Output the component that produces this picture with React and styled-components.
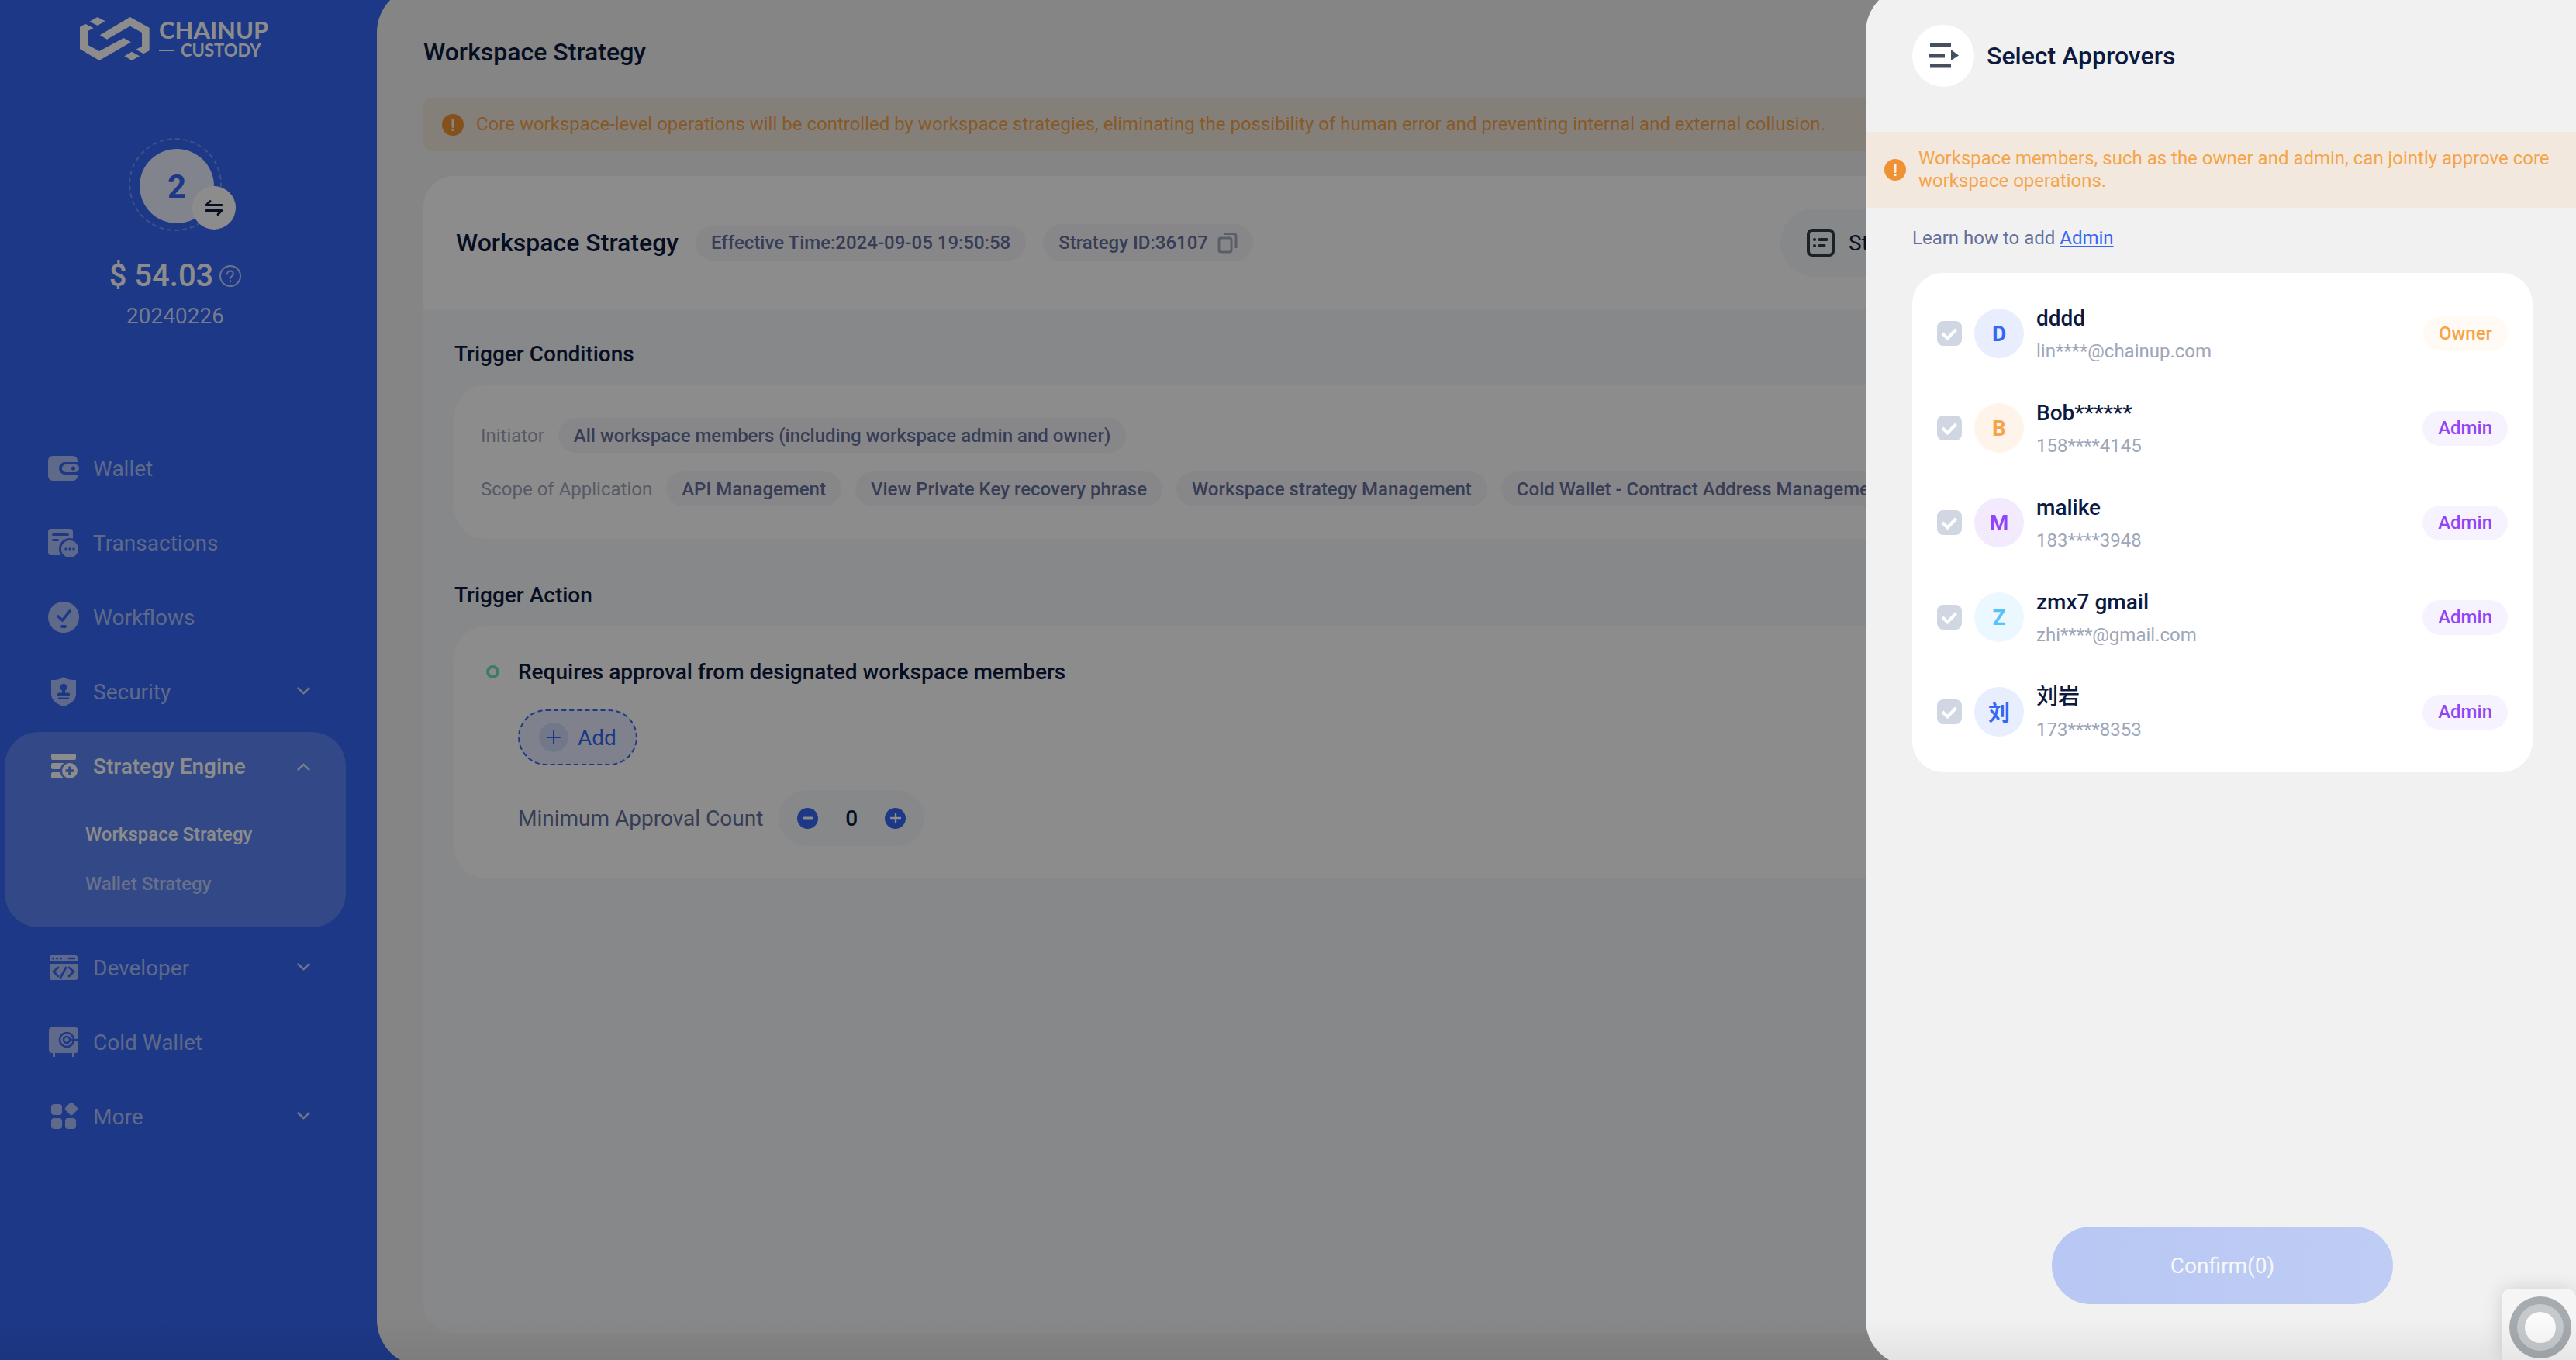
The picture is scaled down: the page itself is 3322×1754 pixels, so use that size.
import React from "react";
import styled, { createGlobalStyle } from "styled-components";

const c = {
  blue: "#3566f4",
  ink: "#0d1a3f",
  slate: "#646f9b",
  muted: "#9ea6b9",
  page: "#f2f2f2",
  tint: "#f6f8fb",
  chip: "#f6f6fb",
  orange: "#f5a44a",
  purple: "#9145f7",
};

const Global = createGlobalStyle`
  *, *::before, *::after { box-sizing: border-box; }
  body {
    margin: 0;
    background: ${c.blue};
    color: ${c.ink};
    font-family: Roboto, "Noto Sans CJK SC", sans-serif;
    font-size: 28px;
  }
  h1, h2, h3 { margin: 0; font-weight: 500; }
  p, ul { margin: 0; padding: 0; }
  ul { list-style: none; }
  button, input { font: inherit; color: inherit; border: 0; padding: 0; background: none; }
  a { color: inherit; text-decoration: none; }
  svg { display: block; flex: none; }
`;

const Shell = styled.div`
  position: relative;
  display: grid;
  grid-template-columns: 486px minmax(0, 1fr);
  min-height: 100vh;
  overflow: hidden;
`;

/* ---------- sidebar ---------- */

const Sidebar = styled.aside`
  display: flex;
  flex-direction: column;
  padding: 22px 34px 0 0;
  color: #fff;
`;

const Brand = styled.a`
  display: flex;
  align-items: center;
  gap: 12px;
  height: 56px;
  margin-left: 103px;
  font-family: Lato, sans-serif;
  font-weight: 700;
`;

const BrandName = styled.span`
  display: grid;
  gap: 4px;
`;

const BrandTop = styled.span`
  font-size: 31px;
  line-height: 26px;
`;

const BrandSub = styled.span`
  display: flex;
  align-items: center;
  gap: 8px;
  font-size: 22px;
  line-height: 20px;

  &::before {
    content: "";
    width: 20px;
    height: 2px;
    background: #fff;
  }
`;

const Account = styled.section`
  display: flex;
  flex-direction: column;
  align-items: center;
  margin: 100px 0 134px;
`;

const Ring = styled.div`
  position: relative;
  width: 120px;
  height: 120px;
  padding: 12px;
  border: 2px dashed rgba(255, 255, 255, 0.3);
  border-radius: 50%;
`;

const Initial = styled.div`
  display: grid;
  place-items: center;
  width: 96px;
  height: 96px;
  border-radius: 50%;
  background: #ebf0ff;
  color: ${c.blue};
  font-size: 42px;
  font-weight: 700;
`;

const SwapButton = styled.button`
  position: absolute;
  top: 60px;
  right: -20px;
  display: grid;
  place-items: center;
  width: 56px;
  height: 56px;
  border-radius: 50%;
  background: #fff;
  color: ${c.ink};
`;

const Balance = styled.div`
  display: flex;
  align-items: center;
  gap: 8px;
  margin-top: 34px;
  font-size: 40px;
  line-height: 48px;
  font-weight: 500;
`;

const AccountName = styled.div`
  margin-top: 10px;
  line-height: 36px;
  opacity: 0.8;
`;

const Nav = styled.nav`
  display: flex;
  flex-direction: column;
  gap: 8px;
  padding-left: 6px;
`;

const NavGroup = styled.div`
  width: 440px;
  border-radius: 44px;
  background: ${(p) => (p.$active ? "rgba(255,255,255,0.2)" : "transparent")};
  padding-bottom: ${(p) => (p.$active ? "24px" : "0")};
`;

const NavRow = styled.a`
  display: flex;
  align-items: center;
  gap: 18px;
  width: 100%;
  height: 88px;
  padding: 0 46px 0 56px;
  color: ${(p) => (p.$active ? "#fff" : "rgba(255,255,255,0.6)")};
  font-weight: ${(p) => (p.$active ? "500" : "400")};
  text-align: left;
`;

const NavLabel = styled.span`
  flex: 1;
`;

const Chevron = styled.svg`
  color: rgba(255, 255, 255, 0.75);
  transform: ${(p) => (p.$up ? "rotate(180deg)" : "none")};
`;

const SubList = styled.ul`
  padding: 12px 0 0 104px;
`;

const SubLink = styled.a`
  display: block;
  font-size: 24px;
  line-height: 64px;
  font-weight: 500;
  color: ${(p) => (p.$active ? "#fff" : "rgba(255,255,255,0.6)")};
`;

/* ---------- main ---------- */

const Main = styled.main`
  display: flex;
  flex-direction: column;
  margin: -18px 0 -8px;
  padding: 66px 60px 42px;
  border-radius: 60px 0 0 60px;
  background: ${c.page};
`;

const Title = styled.h1`
  font-size: 32px;
  line-height: 38px;
`;

const Notice = styled.p`
  display: flex;
  align-items: center;
  gap: 16px;
  margin: ${(p) => (p.$flush ? "58px 0 0" : "40px 0 32px")};
  padding: 20px 24px;
  border-radius: ${(p) => (p.$flush ? "0" : "12px")};
  background: #f2e8de;
  color: ${c.orange};
  font-size: 24px;
  line-height: 29px;
`;

const Card = styled.section`
  flex: 1;
  border-radius: 40px;
  background: ${c.tint};
  overflow: hidden;
`;

const CardHead = styled.header`
  display: flex;
  align-items: center;
  gap: 22px;
  height: 172px;
  padding: 0 40px 0 42px;
  background: #fff;
`;

const Chip = styled.span`
  display: inline-flex;
  align-items: center;
  gap: 12px;
  flex: none;
  min-height: 45px;
  padding: 0 20px;
  border-radius: 24px;
  background: ${(p) => p.$bg || c.chip};
  color: ${(p) => p.$color || c.slate};
  font-size: 24px;
  font-weight: 500;
  white-space: nowrap;
`;

const CopyButton = styled.button`
  display: grid;
  place-items: center;
  height: 48px;
  color: #a3acbd;
`;

const Actions = styled.div`
  flex: 0 0 926px;
  margin-left: auto;
`;

const RecordButton = styled.button`
  display: flex;
  align-items: center;
  gap: 18px;
  min-width: 300px;
  height: 88px;
  padding: 0 34px;
  border-radius: 44px;
  background: #f4f7fb;
`;

const CardBody = styled.div`
  padding: 38px 40px;
`;

const Heading = styled.h2`
  font-size: 28px;
  line-height: 40px;
`;

const Panel = styled.div`
  display: flex;
  flex-direction: column;
  align-items: flex-start;
  gap: ${(p) => p.$gap}px;
  margin: 20px 0 53px;
  padding: ${(p) => p.$pad};
  border-radius: 40px;
  background: #fff;
`;

const Field = styled.div`
  display: flex;
  align-items: center;
  gap: 18px;
  color: ${c.muted};
  font-size: 24px;
`;

const Requirement = styled.h3`
  position: relative;
  font-size: 28px;
  line-height: 34px;

  &::before {
    content: "";
    position: absolute;
    left: -41px;
    top: 8px;
    width: 17px;
    height: 17px;
    border: 4px solid #6fe3b2;
    border-radius: 50%;
  }
`;

const AddButton = styled.button`
  display: flex;
  align-items: center;
  gap: 12px;
  height: 72px;
  margin-bottom: 1px;
  padding: 0 25px;
  border: 2px dashed ${c.blue};
  border-radius: 36px;
  background: #e8edff;
  color: ${c.blue};
`;

const AddBadge = styled.span`
  display: grid;
  place-items: center;
  width: 38px;
  height: 38px;
  border-radius: 50%;
  background: #d0dafc;
`;

const Count = styled.div`
  display: flex;
  align-items: center;
  gap: 20px;
  color: ${c.slate};
`;

const Stepper = styled.div`
  display: flex;
  align-items: center;
  gap: 18px;
  height: 72px;
  padding: 0 24px;
  border-radius: 36px;
  background: ${c.tint};
`;

const StepButton = styled.button`
  display: grid;
  place-items: center;
  width: 27px;
  height: 27px;
  border-radius: 50%;
  background: ${c.blue};
  color: #fff;
`;

const StepValue = styled.input`
  width: 50px;
  color: ${c.ink};
  font-weight: 500;
  text-align: center;
`;

/* ---------- drawer ---------- */

const Backdrop = styled.div`
  position: absolute;
  inset: 0;
  background: rgba(0, 0, 0, 0.45);
`;

const Drawer = styled.section`
  position: absolute;
  top: -18px;
  right: 0;
  bottom: -8px;
  display: flex;
  flex-direction: column;
  width: 916px;
  padding: 50px 0 80px;
  border-radius: 60px 0 0 60px;
  background: #f1f1f1;
  overflow: hidden;
`;

const DrawerHead = styled.header`
  display: flex;
  align-items: center;
  gap: 16px;
  padding: 0 60px;
`;

const RoundButton = styled.button`
  display: grid;
  place-items: center;
  width: 80px;
  height: 80px;
  border-radius: 50%;
  background: #fff;
  color: #454f60;
`;

const DrawerBody = styled.div`
  flex: 1;
  display: flex;
  flex-direction: column;
  padding: 24px 56px 0 60px;
`;

const Learn = styled.p`
  color: ${c.slate};
  font-size: 24px;
  line-height: 30px;

  a {
    color: ${c.blue};
    text-decoration: underline;
  }
`;

const People = styled.ul`
  margin-top: 30px;
  padding: 17px 32px;
  border-radius: 40px;
  background: #fff;
`;

const Person = styled.label`
  display: flex;
  align-items: center;
  gap: 16px;
  height: 122px;
`;

const TickBox = styled.span`
  display: grid;
  color: #fff;

  > * {
    grid-area: 1 / 1;
  }
`;

const Tick = styled.input`
  appearance: none;
  width: 32px;
  height: 32px;
  margin: 0;
  border-radius: 8px;
  background: #d1d7e2;
`;

const Avatar = styled.span`
  display: grid;
  place-items: center;
  width: 64px;
  height: 64px;
  border-radius: 50%;
  background: ${(p) => p.$bg};
  color: ${(p) => p.$color};
  font-weight: 700;
`;

const PersonText = styled.span`
  flex: 1;
  display: grid;
  gap: 8px;
  padding-top: 2px;
`;

const PersonName = styled.span`
  line-height: 36px;
  font-weight: 500;
`;

const PersonContact = styled.span`
  color: ${c.muted};
  font-size: 24px;
  line-height: 32px;
`;

const Confirm = styled.button`
  align-self: center;
  width: 440px;
  height: 100px;
  margin-top: auto;
  border-radius: 50px;
  background: linear-gradient(90deg, #b8c7f3, #bfcdf5);
  color: #f7f7f7;
`;

const Assist = styled.button`
  position: absolute;
  right: 0;
  bottom: 0;
  width: 96px;
  height: 92px;
  padding: 10px 6px 2px 10px;
  border-radius: 12px 12px 0 0;
  background: #f5f5f5;
  box-shadow: 0 0 24px rgba(0, 0, 0, 0.14);
`;

const BottomShade = styled.div`
  position: absolute;
  inset: auto 0 0;
  height: 56px;
  background: linear-gradient(rgba(0, 0, 0, 0), rgba(0, 0, 0, 0.06));
  pointer-events: none;
`;

/* ---------- drawings ---------- */

const Emblem = () => (
  <svg width="90" height="56" viewBox="309 66 270 168" fill="currentColor">
    <path d="M377 66l30 16-30 17-30-16zM510 200l30 17-30 17-29-17z" />
    <path d="M309 104l21-12 32 17-23 12v52l45 25 94-51 29 16-123 71-75-44z" />
    <path d="M503 66l75 41v89l-23 12-29-17 23-12v-53l-46-25-89 51-28-16z" />
  </svg>
);

/* A mask that keeps the whole 40x40 tile except the black shapes given. */
const Cut = ({ id, children }) => (
  <mask id={id}>
    <path d="M0 0h40v40H0z" fill="#fff" />
    <g fill="#000">{children}</g>
  </mask>
);

const glyphs = {
  wallet: (
    <>
      <path d="M6 4h26a6 6 0 016 6v2H22a8 8 0 000 16h16v2a6 6 0 01-6 6H6a6 6 0 01-6-6V10a6 6 0 016-6z" />
      <path
        fillRule="evenodd"
        d="M23 15h12a5 5 0 010 10H23a5 5 0 010-10zm9.500 2.400a2.600 2.600 0 100 5.200 2.600 2.600 0 000-5.200z"
      />
    </>
  ),
  transactions: (
    <>
      <Cut id="m-tx">
        <path d="M6.500 9.500h19M6.500 16.500h6" stroke="#000" strokeWidth="3" strokeLinecap="round" />
        <circle cx="28" cy="28" r="14" />
      </Cut>
      <rect y="2" width="32" height="34" rx="4" mask="url(#m-tx)" />
      <Cut id="m-dots">
        <circle cx="23" cy="28" r="1.700" />
        <circle cx="28" cy="28" r="1.700" />
        <circle cx="33" cy="28" r="1.700" />
      </Cut>
      <circle cx="28" cy="28" r="11" mask="url(#m-dots)" />
    </>
  ),
  workflows: (
    <>
      <Cut id="m-wf">
        <path d="M13 19l5.500 5L28 12" fill="none" stroke="#000" strokeWidth="3.600" strokeLinecap="round" strokeLinejoin="round" />
        <rect x="16" y="30" width="8" height="4" rx="2" />
      </Cut>
      <circle cx="20" cy="20" r="20" mask="url(#m-wf)" />
    </>
  ),
  security: (
    <>
      <Cut id="m-sec">
        <circle cx="20" cy="14.500" r="4.500" />
        <path d="M18 17h4v4.500h4a2 2 0 012 2V25.500H12V23.500a2 2 0 012-2h4z" />
        <path d="M13 27.500h14v2H13z" />
      </Cut>
      <path mask="url(#m-sec)" d="M20 1c5 4 10 4 16 4v18c0 8-7 13-16 16C11 36 4 31 4 23V5c6 0 11 0 16-4z" />
    </>
  ),
  strategy: (
    <>
      <rect x="4" y="4" width="32" height="8" rx="2" />
      <Cut id="m-st">
        <circle cx="28" cy="26" r="12.500" />
      </Cut>
      <g mask="url(#m-st)">
        <rect x="4" y="16" width="18" height="8" rx="2" />
        <rect x="4" y="28" width="18" height="8" rx="2" />
      </g>
      <path
        fillRule="evenodd"
        d="M28 16a10 10 0 100 20 10 10 0 000-20zm-1.800 4.500h3.600v3.700h3.700v3.600h-3.700v3.700h-3.600v-3.700h-3.700v-3.600h3.700z"
      />
    </>
  ),
  developer: (
    <>
      <Cut id="m-dev">
        <path d="M27 8h7" stroke="#000" strokeWidth="2.600" strokeLinecap="round" />
        <circle cx="6.500" cy="8" r="1.500" />
        <circle cx="11.500" cy="8" r="1.500" />
        <circle cx="16.500" cy="8" r="1.500" />
        <path d="M13 20l-6 5 6 6M27 20l6 5-6 6M23 20l-7 13" fill="none" stroke="#000" strokeWidth="2.800" strokeLinecap="round" />
      </Cut>
      <path mask="url(#m-dev)" d="M5 4h30a3 3 0 013 3v4.600H2V7a3 3 0 013-3zM2 15h36v18a3 3 0 01-3 3H5a3 3 0 01-3-3z" />
    </>
  ),
  cold: (
    <>
      <Cut id="m-cw">
        <circle cx="24" cy="17" r="9" fill="none" stroke="#000" strokeWidth="2.600" />
        <circle cx="24" cy="17" r="4" fill="none" stroke="#000" strokeWidth="2.600" />
        <path d="M28 17h12" stroke="#000" strokeWidth="2.400" />
      </Cut>
      <rect x="1" y="1" width="38" height="33" rx="4" mask="url(#m-cw)" />
      <path d="M6 34h3v5H6zM31 34h3v5h-3z" />
    </>
  ),
  more: (
    <>
      <rect x="4" y="4" width="14" height="14" rx="4" />
      <rect x="4" y="22" width="14" height="14" rx="4" />
      <rect x="22" y="22" width="14" height="14" rx="4" />
      <rect x="23.500" y="3.500" width="13" height="13" rx="2.500" transform="rotate(45 30 10)" />
    </>
  ),
};

const NavIcon = ({ name }) => (
  <svg width="40" height="40" viewBox="0 0 40 40" fill="currentColor">
    {glyphs[name]}
  </svg>
);

const ChevronIcon = ({ up }) => (
  <Chevron $up={up} width="17" height="14" viewBox="0 0 17 14" fill="none" stroke="currentColor" strokeWidth="2.400">
    <path d="M1.500 2.500l7 6.500 7-6.500" strokeLinecap="round" />
  </Chevron>
);

const AlertIcon = () => (
  <svg width="28" height="28" viewBox="0 0 28 28">
    <circle cx="14" cy="14" r="14" fill="#f09234" />
    <path d="M14 7.500v9" stroke="#fdf1e4" strokeWidth="3" strokeLinecap="round" />
    <circle cx="14" cy="20.500" r="1.700" fill="#fdf1e4" />
  </svg>
);

const SwapIcon = () => (
  <svg width="24" height="22" viewBox="0 0 24 22" fill="none" stroke="currentColor" strokeWidth="3" strokeLinecap="round" strokeLinejoin="round">
    <path d="M22 7.500H2L7 2.500M2 14.500h20l-5 5" />
  </svg>
);

const HelpIcon = () => (
  <svg width="28" height="28" viewBox="0 0 28 28" fill="none" stroke="currentColor" strokeWidth="2" opacity="0.7">
    <circle cx="14" cy="14" r="13" />
    <path d="M10 11.500a4 4 0 118 0c0 2.500-4 2.700-4 5.700" strokeLinecap="round" />
    <circle cx="14" cy="20.700" r="1" fill="currentColor" strokeWidth="1" />
  </svg>
);

const CopyIcon = () => (
  <svg width="26" height="28" viewBox="0 0 26 28" fill="none" stroke="currentColor" strokeWidth="3">
    <rect x="2" y="8" width="16" height="18" rx="2.500" />
    <path d="M8 2.500h13a3 3 0 013 3V21" />
  </svg>
);

const RecordIcon = () => (
  <svg width="36" height="36" viewBox="0 0 36 36" fill="none" stroke="#303e4c" strokeWidth="4" strokeLinecap="round">
    <rect x="2" y="2" width="32" height="32" rx="5" />
    <path d="M10 14h.1M16.500 14h9M10 22h.1M16.500 22h6" />
  </svg>
);

const PlusIcon = ({ size, weight }) => (
  <svg width={size} height={size} viewBox="0 0 18 18" stroke="currentColor" strokeWidth={weight} strokeLinecap="round">
    <path d="M9 1v16M1 9h16" />
  </svg>
);

const MinusIcon = () => (
  <svg width="14" height="14" viewBox="0 0 14 14" stroke="currentColor" strokeWidth="3" strokeLinecap="round">
    <path d="M2 7h10" />
  </svg>
);

const CollapseIcon = () => (
  <svg width="40" height="40" viewBox="0 0 40 40" fill="currentColor">
    <path d="M3 3h27v5.500H3zM2 17h20v5.500H2zM3 30h27v5.500H3zM30 12l10 7.500L30 26z" />
  </svg>
);

const TickIcon = () => (
  <svg width="32" height="32" viewBox="0 0 32 32" fill="none" stroke="currentColor" strokeWidth="4">
    <path d="M7 16l6.500 6.500L24.500 11" />
  </svg>
);

/* ---------- data ---------- */

const before = [
  { icon: "wallet", label: "Wallet" },
  { icon: "transactions", label: "Transactions" },
  { icon: "workflows", label: "Workflows" },
  { icon: "security", label: "Security", expandable: true },
];

const after = [
  { icon: "developer", label: "Developer", expandable: true },
  { icon: "cold", label: "Cold Wallet" },
  { icon: "more", label: "More", expandable: true },
];

const scopes = [
  "API Management",
  "View Private Key recovery phrase",
  "Workspace strategy Management",
  "Cold Wallet - Contract Address Management",
];

const people = [
  { initial: "D", name: "dddd", contact: "lin****@chainup.com", role: "Owner", bg: "#e9eefe", color: "#3566f4" },
  { initial: "B", name: "Bob******", contact: "158****4145", role: "Admin", bg: "#fff4ea", color: "#f5a44a" },
  { initial: "M", name: "malike", contact: "183****3948", role: "Admin", bg: "#f3eafe", color: "#9145f7" },
  { initial: "Z", name: "zmx7 gmail", contact: "zhi****@gmail.com", role: "Admin", bg: "#ebf8ff", color: "#55c2fa" },
  { initial: "刘", name: "刘岩", contact: "173****8353", role: "Admin", bg: "#e9eefe", color: "#3566f4" },
];

const roles = {
  Owner: { $bg: "#fffaf4", $color: c.orange },
  Admin: { $bg: "#f6f3fe", $color: c.purple },
};

const NavItem = ({ icon, label, expandable }) => (
  <NavGroup>
    <NavRow as={expandable ? "button" : "a"} href={expandable ? undefined : "#"}>
      <NavIcon name={icon} />
      <NavLabel>{label}</NavLabel>
      {expandable && <ChevronIcon />}
    </NavRow>
  </NavGroup>
);

export default function App() {
  return (
    <>
      <Global />
      <Shell>
        <Sidebar>
          <Brand href="#">
            <Emblem />
            <BrandName>
              <BrandTop>CHAINUP</BrandTop>
              <BrandSub>CUSTODY</BrandSub>
            </BrandName>
          </Brand>
          <Account>
            <Ring>
              <Initial>2</Initial>
              <SwapButton aria-label="Switch workspace">
                <SwapIcon />
              </SwapButton>
            </Ring>
            <Balance>
              $ 54.03 <HelpIcon />
            </Balance>
            <AccountName>20240226</AccountName>
          </Account>
          <Nav>
            {before.map((item) => (
              <NavItem key={item.label} {...item} />
            ))}
            <NavGroup $active>
              <NavRow as="button" $active aria-expanded="true">
                <NavIcon name="strategy" />
                <NavLabel>Strategy Engine</NavLabel>
                <ChevronIcon up />
              </NavRow>
              <SubList>
                <li>
                  <SubLink href="#" $active>Workspace Strategy</SubLink>
                </li>
                <li>
                  <SubLink href="#">Wallet Strategy</SubLink>
                </li>
              </SubList>
            </NavGroup>
            {after.map((item) => (
              <NavItem key={item.label} {...item} />
            ))}
          </Nav>
        </Sidebar>

        <Main>
          <Title>Workspace Strategy</Title>
          <Notice>
            <AlertIcon />
            Core workspace-level operations will be controlled by workspace strategies, eliminating the possibility of
            human error and preventing internal and external collusion.
          </Notice>
          <Card>
            <CardHead>
              <Title as="h2">Workspace Strategy</Title>
              <Chip>Effective Time:2024-09-05 19:50:58</Chip>
              <Chip>
                Strategy ID:36107
                <CopyButton aria-label="Copy strategy ID">
                  <CopyIcon />
                </CopyButton>
              </Chip>
              <Actions>
                <RecordButton>
                  <RecordIcon />
                  St
                </RecordButton>
              </Actions>
            </CardHead>
            <CardBody>
              <Heading>Trigger Conditions</Heading>
              <Panel $gap={24} $pad="42px 34px">
                <Field>
                  Initiator
                  <Chip>All workspace members (including workspace admin and owner)</Chip>
                </Field>
                <Field>
                  Scope of Application
                  {scopes.map((s) => (
                    <Chip key={s}>{s}</Chip>
                  ))}
                </Field>
              </Panel>
              <Heading>Trigger Action</Heading>
              <Panel $gap={31} $pad="42px 34px 42px 82px">
                <Requirement>Requires approval from designated workspace members</Requirement>
                <AddButton>
                  <AddBadge>
                    <PlusIcon size={18} weight={2} />
                  </AddBadge>
                  Add
                </AddButton>
                <Count>
                  <label htmlFor="min-count">Minimum Approval Count</label>
                  <Stepper>
                    <StepButton aria-label="Decrease">
                      <MinusIcon />
                    </StepButton>
                    <StepValue id="min-count" defaultValue="0" />
                    <StepButton aria-label="Increase">
                      <PlusIcon size={14} weight={3} />
                    </StepButton>
                  </Stepper>
                </Count>
              </Panel>
            </CardBody>
          </Card>
        </Main>

        <Backdrop />

        <Drawer role="dialog" aria-labelledby="drawer-title">
          <DrawerHead>
            <RoundButton aria-label="Close">
              <CollapseIcon />
            </RoundButton>
            <Title as="h2" id="drawer-title">Select Approvers</Title>
          </DrawerHead>
          <Notice $flush>
            <AlertIcon />
            Workspace members, such as the owner and admin, can jointly approve core workspace operations.
          </Notice>
          <DrawerBody>
            <Learn>
              Learn how to add <a href="#">Admin</a>
            </Learn>
            <People>
              {people.map((p) => (
                <li key={p.name}>
                  <Person>
                    <TickBox>
                      <Tick type="checkbox" defaultChecked disabled />
                      <TickIcon />
                    </TickBox>
                    <Avatar $bg={p.bg} $color={p.color}>{p.initial}</Avatar>
                    <PersonText>
                      <PersonName>{p.name}</PersonName>
                      <PersonContact>{p.contact}</PersonContact>
                    </PersonText>
                    <Chip {...roles[p.role]}>{p.role}</Chip>
                  </Person>
                </li>
              ))}
            </People>
            <Confirm>Confirm(0)</Confirm>
          </DrawerBody>
        </Drawer>

        <Assist aria-label="Assistant">
          <svg width="80" height="80" viewBox="0 0 80 80">
            <circle cx="40" cy="40" r="40" fill="#a5abaf" />
            <circle cx="40" cy="40" r="30" fill="#c6cacd" />
            <circle cx="40" cy="40" r="20" fill="#fbfbfb" />
          </svg>
        </Assist>
        <BottomShade />
      </Shell>
    </>
  );
}
